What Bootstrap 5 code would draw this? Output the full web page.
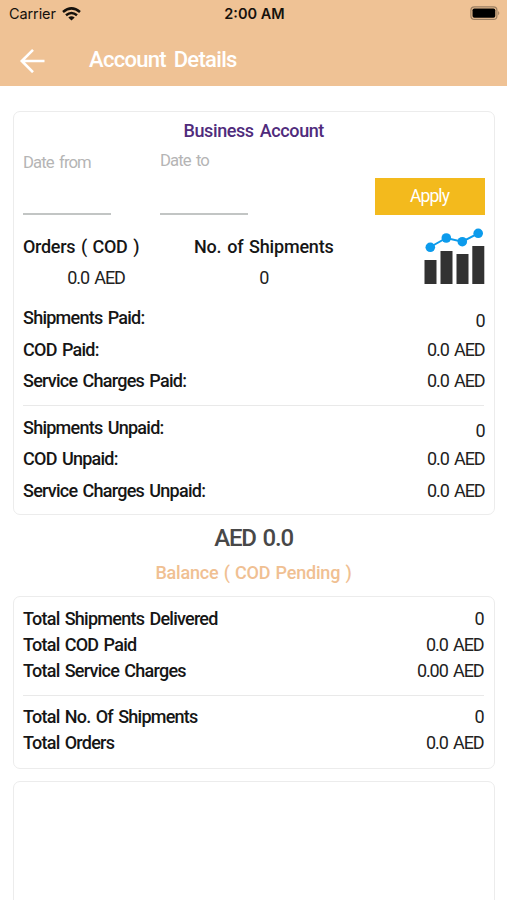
<!DOCTYPE html>
<html lang="en">
<head>
<meta charset="utf-8">
<meta name="viewport" content="width=device-width, initial-scale=1">
<title>Account Details</title>
<link href="https://cdn.jsdelivr.net/npm/bootstrap@5.3.0/dist/css/bootstrap.min.css" rel="stylesheet">
<style>
  body { font: 500 18px/26px Roboto, sans-serif; color: #161616; height: 900px; overflow: hidden; letter-spacing: -.1px; background: #fff; }
  .topbar { background: #efc295; height: 86px; }
  .status { height: 27px; font: 400 14.5px/27px Inter, sans-serif; color: #15110c; letter-spacing: -.1px; padding: 0 6px 0 9px; }
  .status .col:first-child { gap: 6px; }
  .status .col:last-child { padding-bottom: 1px; }
  .clock { font-weight: 600; letter-spacing: 0; margin-right: 1px; }
  .titlebar { height: 59px; padding: 9px 0 0 19px; }
  .titlebar svg { margin-top: -2px; }
  .titlebar h1 { font-size: 22px; line-height: 26px; margin: -3px 0 0 43px; font-weight: 500; letter-spacing: -.7px; word-spacing: 3px; }
  .panel { margin: 0 12.5px 0 13px; border: 1.5px solid #ececec; border-radius: 7px; padding: 0 9px; }
  .panel-account { margin-top: 25px; height: 404px; }
  .panel-account h2 { font-size: 18px; line-height: 26px; margin: 6px 0 0; color: #4f2b7c; letter-spacing: -.4px; word-spacing: 2px; }
  .filters { height: 71px; }
  .field { width: 88px; height: 71px; border-bottom: 2px solid #c2c5c4; color: #b5b5b5; font-weight: 400; font-size: 16.7px; letter-spacing: -.9px; word-spacing: 2px; margin-right: 49px; }
  .field-from { padding-top: 6px; }
  .field-to { padding-top: 4px; margin-right: 0; }
  .apply { width: 110px; height: 37px; border-radius: 0; background: #f3ba1d; color: #fff; font-size: 17.5px; line-height: 24px; padding: 0 0 2px; letter-spacing: -.9px; }
  .apply:hover { background: #e5ad12; color: #fff; }
  .summary { height: 71px; margin-top: 19px; letter-spacing: -.2px; word-spacing: 1.5px; }
  .orders { width: 146px; letter-spacing: -.3px; }
  .shipments { margin-left: 25px; }
  .chart { margin-top: -6px; }
  .amount { font-weight: 400; color: #222; letter-spacing: -1.1px; word-spacing: 2px; }
  .summary .amount { margin-top: 5px; }
  .rows, .panel-totals { letter-spacing: -.75px; word-spacing: 1.5px; }
  .rows div { height: 31.7px; }
  .rows .first .amount { padding-top: 3px; }
  .rule { border-top: 1.5px solid #e9e9e9; }
  .panel-account .rule { margin: 4.5px 1px 9px 0; }
  .panel-totals .rule { margin: 11px 1px 8px 0; }
  .balance { font-size: 24px; line-height: 30px; color: #484848; margin-top: 8px; letter-spacing: -1.2px; word-spacing: 2px; }
  .pending { color: #f0c092; margin-top: 7px; letter-spacing: -.2px; word-spacing: 1px; }
  .panel-totals { height: 173px; margin-top: 10px; padding-top: 9px; }
  .panel-totals .amount { margin-right: 1px; }
  .panel-empty { height: 160px; margin-top: 12px; }
</style>
<script src="https://cdn.jsdelivr.net/npm/bootstrap@5.3.0/dist/js/bootstrap.bundle.min.js"></script>
</head>
<body>
<header class="topbar">
  <div class="status row g-0">
    <div class="col d-flex align-items-center"><span>Carrier</span>
      <svg width="19" height="14" viewBox="0 0 19 14" fill="none" stroke="#15110c" stroke-width="2.5"><path d="M1 5Q9.500-2.200 18 5M4 8.300Q9.500 3.700 15 8.300"/><path d="M6.300 10.500Q9.500 8 12.700 10.500L9.500 13.600Z" fill="#15110c" stroke="none"/></svg>
    </div>
    <div class="col-auto clock">2:00 AM</div>
    <div class="col d-flex align-items-center justify-content-end">
      <svg width="31" height="14" viewBox="0 0 31 14"><rect x=".9" y=".8" width="26" height="12.6" rx="3.5" fill="none" stroke="#9b7e61" stroke-width="1.2"/><rect x="2.5" y="2.5" width="22.8" height="9.2" rx="1.8" fill="#000"/><path d="M28.3 5Q30.2 7.1 28.3 9.2Z" fill="#8d7258"/></svg>
    </div>
  </div>
  <div class="titlebar d-flex align-items-center text-white">
    <svg width="27" height="26" viewBox="0 0 27 26" fill="none" stroke="#fff" stroke-width="2.6"><path d="M25.5 14H3M14 2.8L2.8 14L14 25.2"/></svg>
    <h1>Account Details</h1>
  </div>
</header>
<main>
  <section class="panel panel-account">
    <h2 class="text-center">Business Account</h2>
    <div class="filters d-flex align-items-end">
      <div class="field field-from">Date from</div>
      <div class="field field-to">Date to</div>
      <button class="btn apply ms-auto">Apply</button>
    </div>
    <div class="summary d-flex">
      <div class="orders"><div>Orders ( COD )</div><div class="amount text-center">0.0 AED</div></div>
      <div class="shipments text-center"><div>No. of Shipments</div><div class="amount">0</div></div>
      <svg class="chart ms-auto" width="62" height="58" viewBox="0 0 62 58"><g fill="#323232"><path d="M1.5 32h12v24h-12zM17.5 23h12v33h-12zM33.5 26h12v30h-12zM49.3 18h12v38h-12z"/></g><path d="M7.3 19L23.3 10L39.3 13.7L55.2 5.3" fill="none" stroke="#0c9bec" stroke-width="2"/><g fill="#0c9bec"><circle cx="7.3" cy="19.3" r="4.8"/><circle cx="23.3" cy="10" r="4.8"/><circle cx="39.3" cy="13.7" r="4.8"/><circle cx="55.2" cy="5.3" r="4.8"/></g></svg>
    </div>
    <div class="rows">
      <div class="first d-flex justify-content-between"><span>Shipments Paid:</span><span class="amount">0</span></div>
      <div class="d-flex justify-content-between"><span>COD Paid:</span><span class="amount">0.0 AED</span></div>
      <div class="d-flex justify-content-between"><span>Service Charges Paid:</span><span class="amount">0.0 AED</span></div>
    </div>
    <div class="rule"></div>
    <div class="rows">
      <div class="first d-flex justify-content-between"><span>Shipments Unpaid:</span><span class="amount">0</span></div>
      <div class="d-flex justify-content-between"><span>COD Unpaid:</span><span class="amount">0.0 AED</span></div>
      <div class="d-flex justify-content-between"><span>Service Charges Unpaid:</span><span class="amount">0.0 AED</span></div>
    </div>
  </section>
  <div class="balance text-center">AED 0.0</div>
  <div class="pending text-center">Balance ( COD Pending )</div>
  <section class="panel panel-totals">
    <div class="d-flex justify-content-between"><span>Total Shipments Delivered</span><span class="amount">0</span></div>
    <div class="d-flex justify-content-between"><span>Total COD Paid</span><span class="amount">0.0 AED</span></div>
    <div class="d-flex justify-content-between"><span>Total Service Charges</span><span class="amount">0.00 AED</span></div>
    <div class="rule"></div>
    <div class="d-flex justify-content-between"><span>Total No. Of Shipments</span><span class="amount">0</span></div>
    <div class="d-flex justify-content-between"><span>Total Orders</span><span class="amount">0.0 AED</span></div>
  </section>
  <section class="panel panel-empty"></section>
</main>
</body>
</html>
